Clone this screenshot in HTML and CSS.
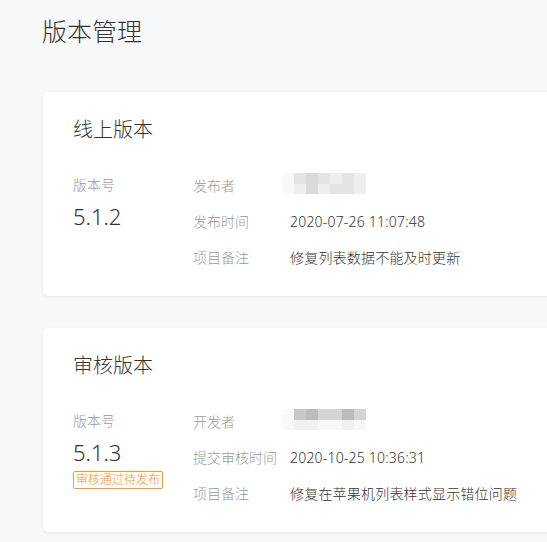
FILE: index.html
```html
<!DOCTYPE html>
<html lang="zh-CN">
<head>
<meta charset="utf-8">
<title>版本管理</title>
<link rel="stylesheet" href="styles.css">
</head>
<body>
<div class="page">
  <h1 class="page-title">版本管理</h1>

  <section class="card">
    <h2 class="card-title">线上版本</h2>
    <div class="card-body">
      <div class="ver-col">
        <div class="ver-label">版本号</div>
        <div class="ver-num">5.1.2</div>
      </div>
      <div class="info">
        <div class="row">
          <span class="label">发布者</span>
          <span class="mosaic">
            <i class="c0"></i><i class="c2"></i><i class="c3"></i><i class="c2"></i><i class="c1"></i><i class="c2"></i><i class="c1"></i>
            <i class="c0"></i><i class="c1"></i><i class="c3"></i><i class="c1"></i><i class="c2"></i><i class="c2"></i><i class="c1"></i>
          </span>
        </div>
        <div class="row">
          <span class="label">发布时间</span>
          <span class="value">2020-07-26 11:07:48</span>
        </div>
        <div class="row">
          <span class="label">项目备注</span>
          <span class="value">修复列表数据不能及时更新</span>
        </div>
      </div>
    </div>
  </section>

  <section class="card">
    <h2 class="card-title">审核版本</h2>
    <div class="card-body">
      <div class="ver-col">
        <div class="ver-label">版本号</div>
        <div class="ver-num">5.1.3</div>
        <span class="badge">审核通过待发布</span>
      </div>
      <div class="info">
        <div class="row">
          <span class="label">开发者</span>
          <span class="mosaic dark">
            <i class="c0"></i><i class="c3"></i><i class="c4"></i><i class="c2"></i><i class="c2"></i><i class="c4"></i><i class="c2"></i>
            <i class="c0"></i><i class="c1"></i><i class="c1"></i><i class="c0"></i><i class="c0"></i><i class="c1"></i><i class="c0"></i>
          </span>
        </div>
        <div class="row">
          <span class="label">提交审核时间</span>
          <span class="value">2020-10-25 10:36:31</span>
        </div>
        <div class="row">
          <span class="label">项目备注</span>
          <span class="value">修复在苹果机列表样式显示错位问题</span>
        </div>
      </div>
    </div>
  </section>
</div>
</body>
</html>
```

FILE: styles.css
```css
html, body {
  margin: 0;
  padding: 0;
  background: #f7f8fa;
  overflow: hidden;
}
body {
  font-family: "Noto Sans", "Noto Sans CJK SC", sans-serif;
  font-weight: 300;
  color: #333;
}
.page {
  padding: 14px 0 0 42px;
  width: 600px;
}
.page-title {
  margin: 0;
  font-size: 25px;
  line-height: 34px;
  font-weight: 300;
  color: #333;
}
.card {
  background: #fff;
  border-radius: 5px;
  box-shadow: 0 1px 3px rgba(0, 0, 0, 0.07);
  margin: 44px 0 32px 1px;
  padding: 24px 30px 21px;
  height: 159px;
}
.card + .card {
  margin-top: 0;
}
.card-title {
  margin: 0;
  font-size: 20px;
  line-height: 28px;
  font-weight: 300;
  color: #333;
}
.card-body {
  display: flex;
  margin-top: 23px;
}
.ver-col {
  width: 120px;
  display: flex;
  flex-direction: column;
  align-items: flex-start;
}
.ver-label {
  font-size: 14px;
  line-height: 36px;
  color: #999;
}
.ver-num {
  font-size: 22px;
  line-height: 26px;
  color: #333;
}
.badge {
  margin-top: 6px;
  border: 1px solid #fa9a2c;
  border-radius: 2px;
  color: #f7921e;
  font-size: 12px;
  line-height: 16px;
  padding: 0 2px;
}
.info {
  display: flex;
  flex-direction: column;
}
.row {
  display: flex;
  align-items: center;
  height: 36px;
}
.label {
  width: 97px;
  font-size: 14px;
  color: #999;
}
.value {
  font-size: 14px;
  color: #333;
  letter-spacing: 0.2px;
}
.mosaic {
  display: grid;
  grid-template-columns: 12px repeat(6, 12px);
  grid-template-rows: 11px 10px;
  margin-left: -8px;
  margin-top: -4px;
}
.mosaic i {
  display: block;
}
.mosaic .c0 { background: #f8f8f8; }
.mosaic .c1 { background: #eeeeee; }
.mosaic .c2 { background: #e4e4e4; }
.mosaic .c3 { background: #dadada; }
.mosaic .c4 { background: #bcbcbc; }
.mosaic i:first-child { border-top-left-radius: 5px; }
.mosaic i:nth-child(8) { border-bottom-left-radius: 6px; }
.mosaic.dark .c2 { background: #d4d4d4; }
.mosaic.dark .c3 { background: #c8c8c8; }
.mosaic.dark .c1 { background: #f0f0f0; }
```
